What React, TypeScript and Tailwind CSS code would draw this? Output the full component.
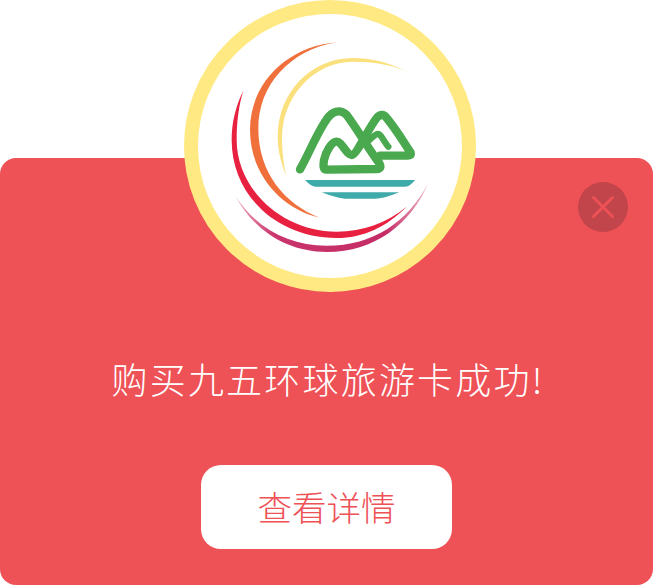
import React from 'react';

const cjk = { fontFamily: '"Noto Sans CJK SC", "Liberation Sans", sans-serif' };

const Logo = () => (
  <svg viewBox="12 0 876 876" className="w-[292px] h-[292px] absolute inset-0">
    <defs>
      <linearGradient id="plum" x1="0" x2="1" y1="0" y2="0">
        <stop offset="0" stopColor="#eda0b8" />
        <stop offset="0.2" stopColor="#c9356c" />
        <stop offset="0.78" stopColor="#c42c66" />
        <stop offset="1" stopColor="#f0b4c6" />
      </linearGradient>
    </defs>
    {/* swooshes */}
    <path fill="url(#plum)" d="M168 592 C 225 695 325 756 440 756 C 585 756 695 670 745 548 C 685 665 580 737 440 737 C 330 737 235 690 168 592 Z" />
    <path fill="#e7213f" d="M190 272 C 166 320 155 370 155 420 C 155 585 290 714 470 714 C 550 714 620 680 680 620 C 620 668 550 695 470 695 C 310 695 170 570 170 420 C 170 370 175 320 190 272 Z" />
    <path fill="#f0703c" d="M470 127 C 320 140 210 250 210 390 C 210 520 300 625 418 653 C 315 612 235 520 235 385 C 235 255 330 150 470 127 Z" />
    <path fill="#fbe07e" d="M677 213 C 620 185 570 174 520 174 C 390 174 293 280 293 410 C 293 450 303 490 318 525 C 310 490 306 450 306 415 C 306 290 400 185 520 185 C 580 185 630 193 677 213 Z" />
    {/* mountains */}
    <path
      fill="none"
      stroke="#4aa84f"
      strokeWidth="25"
      strokeLinecap="round"
      strokeLinejoin="round"
      d="M360 508 C 385 465 410 400 440 358 C 455 335 480 325 500 345 C 530 385 565 445 598 490 C 604 500 602 507 590 507 L 440 509 C 430 509 429 500 432 480 C 437 455 455 425 470 425 C 485 425 500 465 515 465 C 530 465 565 385 590 354 C 600 342 612 342 620 354 C 650 390 670 425 692 458 C 694 466 688 467 680 467 L 600 467"
    />
    <path
      fill="none"
      stroke="#4aa84f"
      strokeWidth="19"
      strokeLinecap="round"
      strokeLinejoin="round"
      d="M562 425 C 575 415 590 395 600 405 C 610 415 615 430 625 440"
    />
    {/* water */}
    <path fill="#3eaaa9" d="M375 540 L 705 540 C 695 552 688 560 675 560 L 405 560 C 392 558 385 550 375 540 Z" />
    <path fill="#3eaaa9" d="M425 577 L 658 577 C 630 588 610 596 585 596 L 495 596 C 470 594 450 586 425 577 Z" />
  </svg>
);

export default function App() {
  return (
    <div className="relative w-[653px] h-[585px] bg-white overflow-hidden" style={cjk}>
      <div className="relative mt-[158px] h-[427px] bg-[#ee5156] rounded-[16px] flex flex-col items-center pt-[195px]">
        <button className="absolute top-[24px] right-[25px] w-[50px] h-[50px] rounded-full bg-[#c1454a] flex items-center justify-center">
          <svg viewBox="0 0 24 24" className="w-[24px] h-[24px]" fill="none" stroke="#ee5156" strokeWidth="3" strokeLinecap="round">
            <path d="M2.5 2.5 L21.5 21.5 M21.5 2.5 L2.5 21.5" />
          </svg>
        </button>
        <p className="pl-[3px] text-white text-[36px] leading-[50px] font-light tracking-[2.2px] whitespace-nowrap">购买九五环球旅游卡成功!</p>
        <button className="mt-[62px] w-[251px] h-[84px] bg-white rounded-[20px] text-[#ee5156] text-[34.5px] font-light flex items-center justify-center">
          查看详情
        </button>
      </div>
      <div className="absolute top-0 left-[184px] w-[292px] h-[292px] rounded-full bg-white border-[14px] border-[#ffe983]" />
      <div className="absolute top-0 left-[184px] w-[292px] h-[292px]">
        <Logo />
      </div>
    </div>
  );
}
